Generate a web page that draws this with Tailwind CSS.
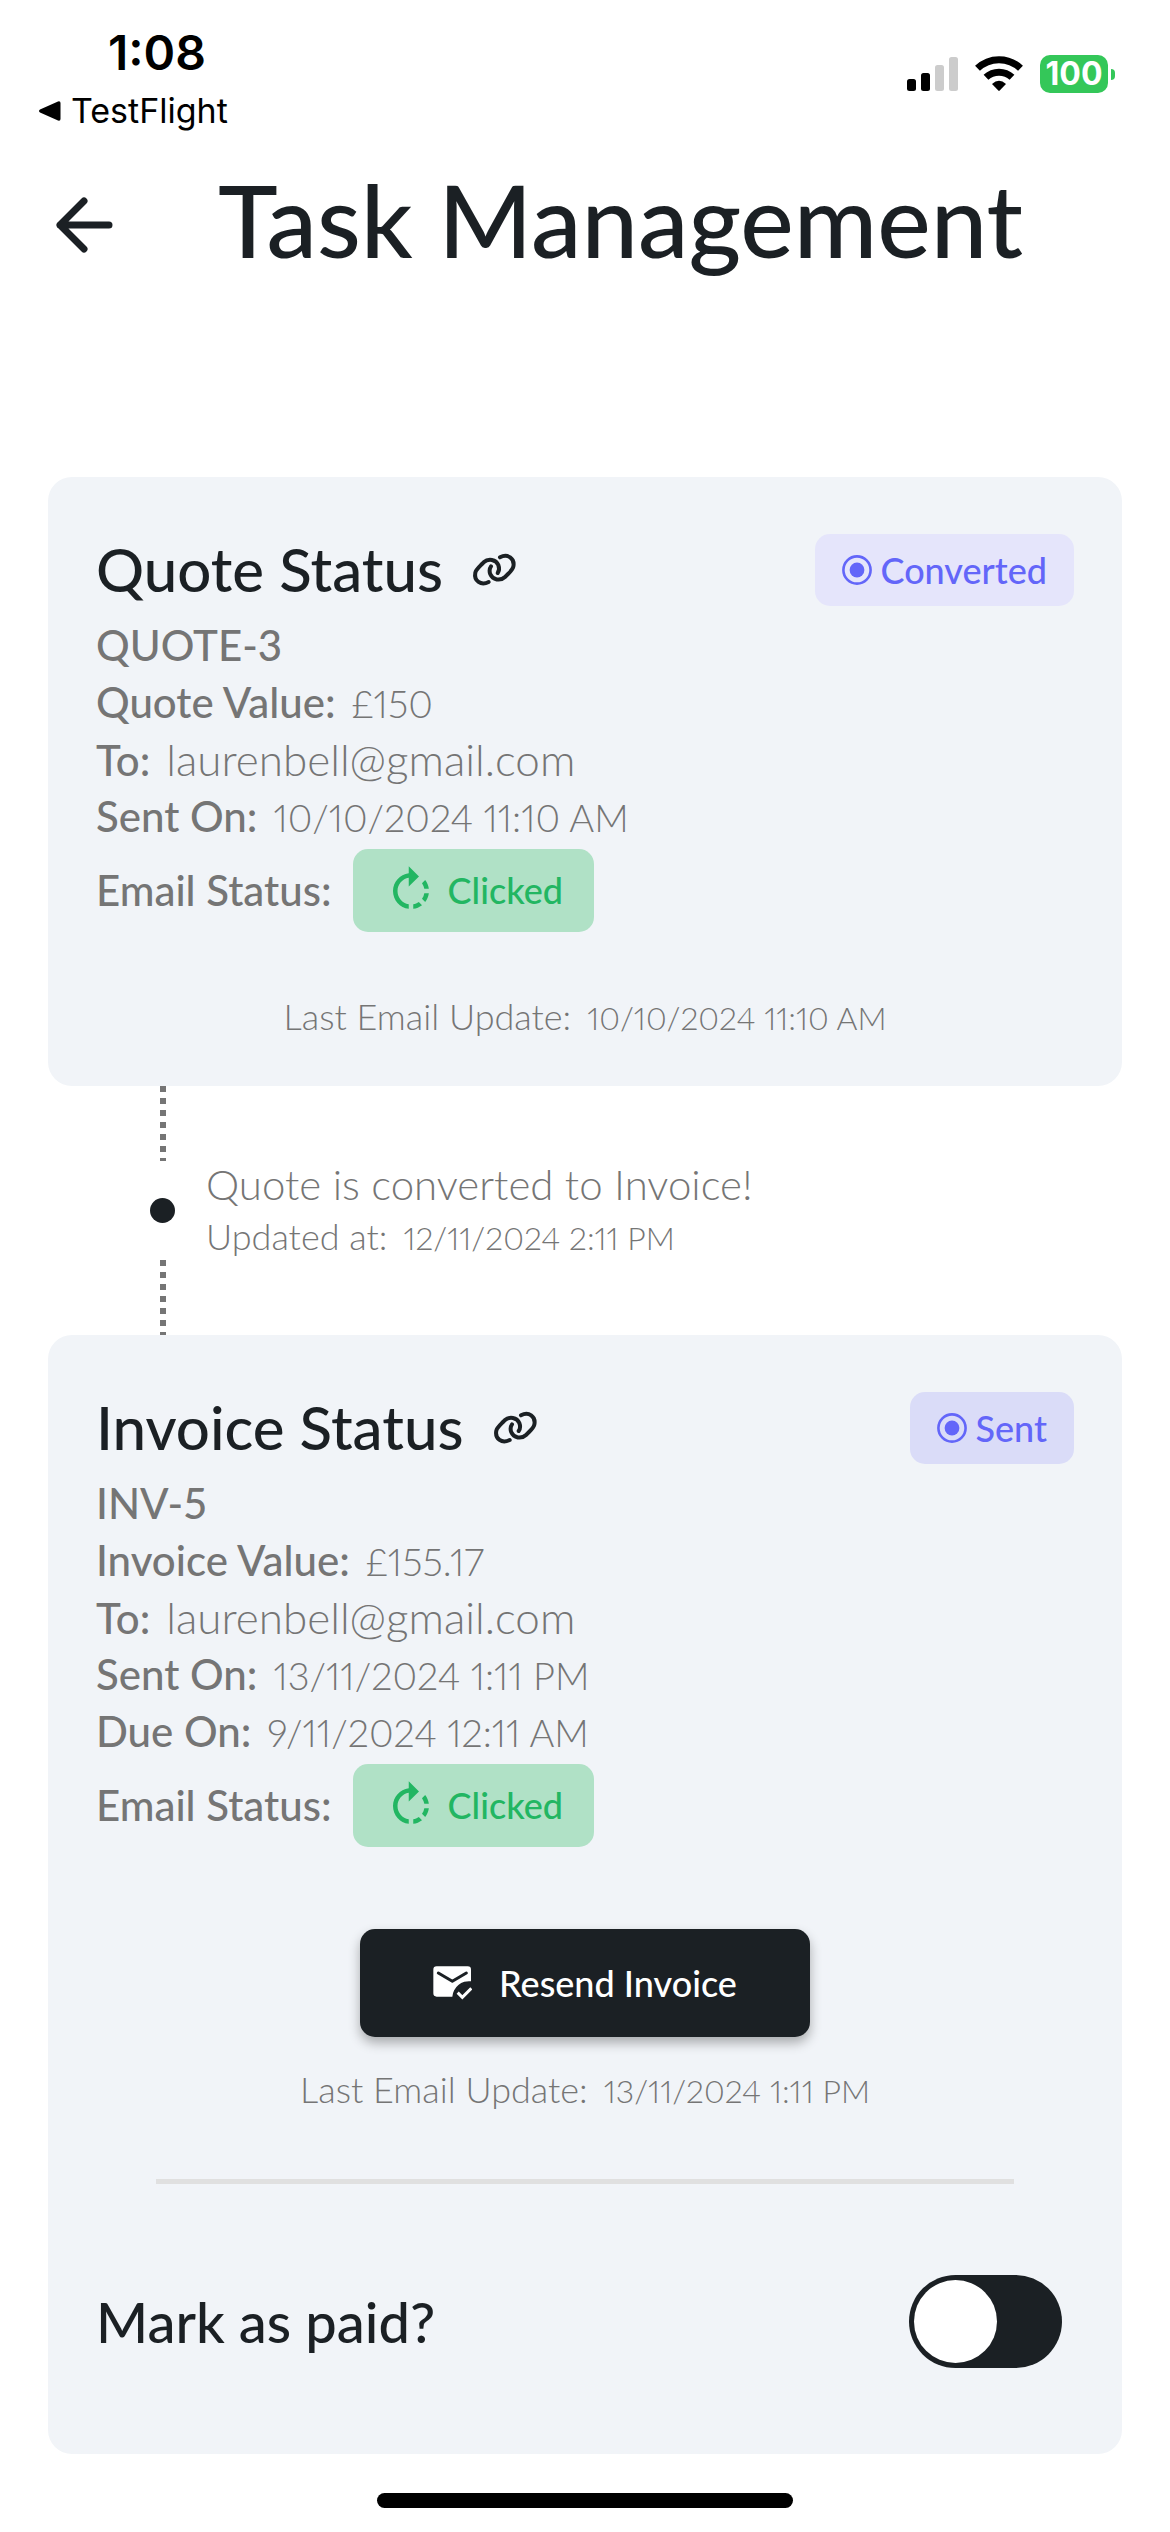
<!DOCTYPE html>
<html lang="en">
<head>
<meta charset="utf-8">
<meta name="viewport" content="width=device-width, initial-scale=1">
<title>Task Management</title>
<script src="https://cdn.jsdelivr.net/npm/@tailwindcss/browser@4"></script>
</head>
<body class="bg-white font-['Lato',sans-serif] text-[#1b2024]">
<svg class="hidden" aria-hidden="true">
  <symbol id="link" viewBox="30 65 141 111">
    <g fill="none" stroke="currentColor" stroke-width="12" stroke-linecap="round">
      <path d="M83 158C60 170 38 155 43 130C45 120 55 112 63 104L68 99C82 86 105 90 112 107C115 115 115 124 110 131"/>
      <path d="M117 84C140 72 162 87 157 112C155 122 145 130 137 138L132 143C118 156 95 152 88 135C85 127 85 118 90 111"/>
    </g>
  </symbol>
  <symbol id="radio" viewBox="0 0 30 30">
    <circle cx="15" cy="15" r="13.6" fill="none" stroke="currentColor" stroke-width="2.6"/>
    <circle cx="15" cy="15" r="7.4" fill="currentColor"/>
  </symbol>
  <symbol id="rotate" viewBox="0 0 24 24">
    <path fill="currentColor" d="M15.55 5.55L11 1v3.07C7.06 4.56 4 7.92 4 12s3.05 7.44 7 7.93v-2.02c-2.84-.48-5-2.94-5-5.91s2.16-5.43 5-5.91V10l4.55-4.45zM19.93 11c-.17-1.39-.72-2.73-1.62-3.89l-1.42 1.42c.54.75.88 1.6 1.02 2.47h2.02zM13 17.9v2.02c1.39-.17 2.74-.71 3.9-1.61l-1.44-1.44c-.75.54-1.59.89-2.46 1.03zm3.89-2.42l1.42 1.41c.9-1.16 1.45-2.5 1.62-3.89h-2.02c-.14.87-.48 1.72-1.02 2.48z"/>
  </symbol>
</svg>

<div class="flex items-start justify-between pt-[25px] pr-[55px] pl-[38px] font-['Inter',sans-serif] text-black">
  <div>
    <div class="pl-[70px] text-[48px] leading-[56px] font-semibold">1:08</div>
    <a href="#" class="mt-[10px] flex items-center gap-[10px] text-[34px] leading-[40px]">
      <svg class="h-5 w-[23px]" viewBox="0 0 23 20" aria-hidden="true"><path d="M2 8.600L20 .4Q22.500 -.3 22.500 2V18Q22.500 20.300 20 19.600L2 11.400Q0 10 2 8.600Z"/></svg>
      TestFlight
    </a>
  </div>
  <div class="mt-[30px] flex items-center gap-[17px]">
    <svg class="h-[38px] w-[51px]" viewBox="0 0 51 38" aria-label="Signal">
      <rect y="24" width="9" height="12" rx="2.500"/><rect x="14" y="18" width="9" height="18" rx="2.500"/>
      <rect x="28" y="10" width="9" height="26" rx="2.500" fill="#ccc"/><rect x="42" y="2" width="9" height="34" rx="2.500" fill="#ccc"/>
    </svg>
    <svg class="h-[38px] w-[48px]" viewBox="0 0 48 38" aria-label="Wi-Fi">
      <g fill="none" stroke="#000" stroke-width="7"><path d="M2.500 13.300A31 31 0 0 1 45.500 13.300"/><path d="M11 22.300A19 19 0 0 1 37 22.300"/></g>
      <path d="M17 29Q24 22.500 31 29L24.700 35.600Q24 36.300 23.300 35.600Z"/>
    </svg>
    <div class="flex items-center gap-[3px]">
      <div class="flex h-[38px] w-[68px] items-center justify-center rounded-[10px] bg-[#34c759] text-[32px] font-bold text-white">100</div>
      <div class="h-[11px] w-1 rounded-r-full bg-[#34c759]"></div>
    </div>
  </div>
</div>

<header class="mt-[28px] flex items-end pl-12">
  <button class="flex h-[108px] w-[72px] items-center justify-center" aria-label="Back">
    <svg class="h-[60px] w-[60px]" viewBox="0 0 60 60" fill="none" stroke="currentColor" stroke-width="7" stroke-linecap="round" stroke-linejoin="round"><path d="M55 30H6M30 6L6 30L30 54"/></svg>
  </button>
  <h1 class="ml-[98px] text-[101px] leading-[120px] font-medium">Task Management</h1>
</header>

<main class="mt-[198px] px-12">
  <section class="rounded-3xl bg-[#f1f4f8] px-12 pt-[57px] pb-12">
    <div class="flex items-start justify-between">
      <div class="flex items-center gap-7">
        <h2 class="text-[60px] leading-[70px] font-medium">Quote Status</h2>
        <a href="#" aria-label="Open quote"><svg class="h-[37px] w-[47px]"><use href="#link"/></svg></a>
      </div>
      <div class="flex h-[72px] items-center gap-[9px] rounded-[15px] bg-[#e5e5fb] px-[27px] text-[36px] font-medium text-[#6366f9]">
        <svg class="h-[30px] w-[30px]"><use href="#radio"/></svg>Converted
      </div>
    </div>
    <dl class="mt-[11px] text-[42px] leading-[57px] text-[#757575]">
      <div class="font-medium">QUOTE-3</div>
      <div class="flex h-[57px] items-baseline gap-4"><dt class="font-medium">Quote Value:</dt><dd class="text-[38px] font-light proportional-nums">£150</dd></div>
      <div class="flex h-[57px] items-baseline gap-4"><dt class="font-medium">To:</dt><dd class="text-[44px] font-light">laurenbell@gmail.com</dd></div>
      <div class="flex h-[57px] items-baseline gap-4"><dt class="font-medium">Sent On:</dt><dd class="text-[38px] font-light proportional-nums">10/10/2024 11:10 AM</dd></div>
      <div class="mt-1 flex items-center gap-[21px]">
        <dt class="font-medium">Email Status:</dt>
        <dd class="flex h-[83px] items-center gap-[10px] rounded-[15px] bg-[#b0e1c6] px-[31px] text-[36px] font-medium text-[#22b662]"><svg class="h-[54px] w-[54px]"><use href="#rotate"/></svg>Clicked</dd>
      </div>
    </dl>
    <p class="mt-[62px] flex h-[44px] items-baseline justify-center gap-4 text-[36px] leading-[44px] font-light text-[#757575]"><span>Last Email Update:</span><span class="text-[32px] proportional-nums">10/10/2024 11:10 AM</span></p>
  </section>

  <div class="flex text-[#757575]">
    <div class="ml-[102px] flex w-[25px] flex-col items-center">
      <div class="h-[75px] w-[6px] bg-[repeating-linear-gradient(#757575_0_6px,transparent_6px_12px)]"></div>
      <div class="flex h-[99px] items-center"><div class="h-[25px] w-[25px] rounded-full bg-[#1b2024]"></div></div>
      <div class="h-[75px] w-[6px] bg-[repeating-linear-gradient(#757575_0_6px,transparent_6px_12px)]"></div>
    </div>
    <div class="ml-[31px] flex flex-col justify-center gap-[5px] font-light">
      <p class="text-[42px] leading-[46px]">Quote is converted to Invoice!</p>
      <p class="flex h-[48px] items-baseline gap-4 text-[36px] leading-[48px]"><span>Updated at:</span><span class="text-[32px] proportional-nums">12/11/2024 2:11 PM</span></p>
    </div>
  </div>

  <section class="rounded-3xl bg-[#f1f4f8] px-12 pt-[57px] pb-[86px]">
    <div class="flex items-start justify-between">
      <div class="flex items-center gap-7">
        <h2 class="text-[60px] leading-[70px] font-medium">Invoice Status</h2>
        <a href="#" aria-label="Open invoice"><svg class="h-[37px] w-[47px]"><use href="#link"/></svg></a>
      </div>
      <div class="flex h-[72px] items-center gap-[9px] rounded-[15px] bg-[#dadcf8] px-[27px] text-[36px] font-medium text-[#6366f9]">
        <svg class="h-[30px] w-[30px]"><use href="#radio"/></svg>Sent
      </div>
    </div>
    <dl class="mt-[11px] text-[42px] leading-[57px] text-[#757575]">
      <div class="font-medium">INV-5</div>
      <div class="flex h-[57px] items-baseline gap-4"><dt class="font-medium">Invoice Value:</dt><dd class="text-[38px] font-light proportional-nums">£155.17</dd></div>
      <div class="flex h-[57px] items-baseline gap-4"><dt class="font-medium">To:</dt><dd class="text-[44px] font-light">laurenbell@gmail.com</dd></div>
      <div class="flex h-[57px] items-baseline gap-4"><dt class="font-medium">Sent On:</dt><dd class="text-[38px] font-light proportional-nums">13/11/2024 1:11 PM</dd></div>
      <div class="flex h-[57px] items-baseline gap-4"><dt class="font-medium">Due On:</dt><dd class="text-[38px] font-light proportional-nums">9/11/2024 12:11 AM</dd></div>
      <div class="mt-1 flex items-center gap-[21px]">
        <dt class="font-medium">Email Status:</dt>
        <dd class="flex h-[83px] items-center gap-[10px] rounded-[15px] bg-[#b0e1c6] px-[31px] text-[36px] font-medium text-[#22b662]"><svg class="h-[54px] w-[54px]"><use href="#rotate"/></svg>Clicked</dd>
      </div>
    </dl>
    <button class="mx-auto mt-[82px] flex h-[108px] items-center justify-center gap-[27px] rounded-[15px] bg-[#1b2024] px-[73px] text-[36px] font-medium text-white shadow-[0_6px_12px_rgba(0,0,0,0.3)]">
      <svg class="h-[34px] w-[39px]" viewBox="285 204 117 102" fill="none" stroke-width="9" aria-hidden="true">
        <path fill="#fff" d="M296 205H389Q399 205 399 215V250A50 50 0 0 0 343 296H296Q286 296 286 286V215Q286 205 296 205Z"/>
        <path stroke="#1b2024" stroke-linecap="round" stroke-linejoin="round" d="M301 225L343 250L385 225"/>
        <path stroke="#fff" d="M359 284L373 298L400 271"/>
      </svg>
      Resend Invoice
    </button>
    <p class="mt-[30px] flex h-[44px] items-baseline justify-center gap-4 text-[36px] leading-[44px] font-light text-[#757575]"><span>Last Email Update:</span><span class="text-[32px] proportional-nums">13/11/2024 1:11 PM</span></p>
    <hr class="mx-[60px] mt-[68px] border-t-[5px] border-[#e0e0e0]">
    <div class="mt-[91px] flex items-center justify-between pr-3">
      <label for="paid" class="text-[56px] leading-[64px] font-medium">Mark as paid?</label>
      <input id="paid" type="checkbox" role="switch" class="h-[93px] w-[153px] appearance-none rounded-full bg-[#1b2024] p-[5px] before:block before:h-[83px] before:w-[83px] before:rounded-full before:bg-white checked:before:ml-auto">
    </div>
  </section>
</main>
<div class="mx-auto mt-[39px] mb-6 h-[15px] w-[416px] rounded-full bg-black"></div>
</body>
</html>
